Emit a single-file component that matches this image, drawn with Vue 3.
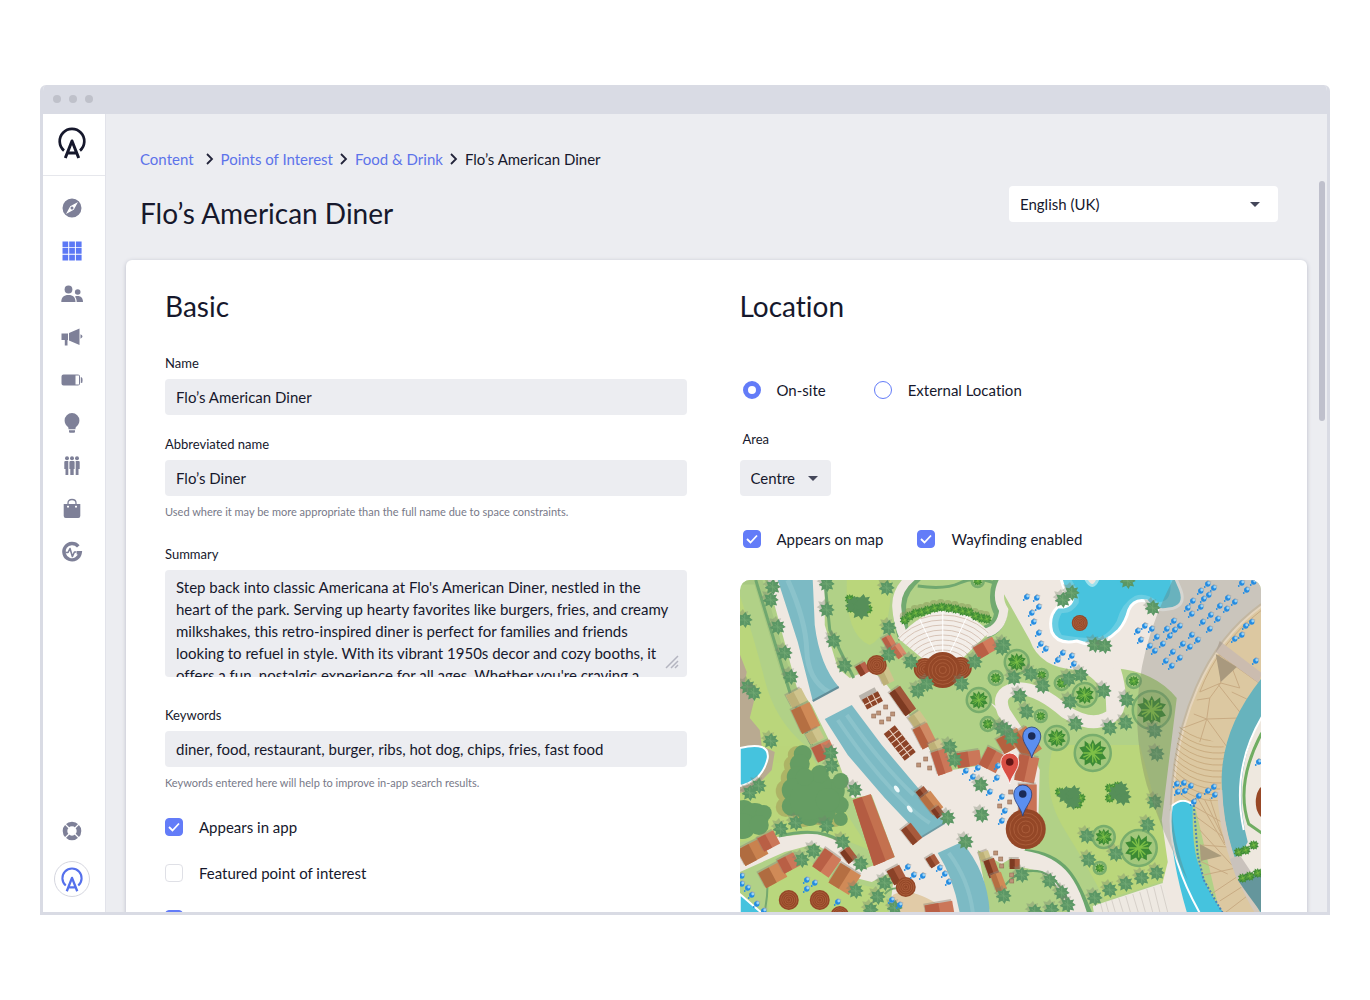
<script setup>
import { ref } from 'vue'

const name = ref('Flo’s American Diner')
const shortName = ref('Flo’s Diner')
const summary = ref("Step back into classic Americana at Flo's American Diner, nestled in the\nheart of the park. Serving up hearty favorites like burgers, fries, and creamy\nmilkshakes, this retro-inspired diner is perfect for families and friends\nlooking to refuel in style. With its vibrant 1950s decor and cozy booths, it\noffers a fun, nostalgic experience for all ages. Whether you're craving a")
const keywords = ref('diner, food, restaurant, burger, ribs, hot dog, chips, fries, fast food')
const site = ref('on')

const crumbs = ['Content', 'Points of Interest', 'Food & Drink']

// Map decoration: [x, y, radius]
const rings = [
  [277, 82, 12], [345, 115, 12], [412, 130, 19], [394, 101, 7], [302, 95, 6], [322, 103, 7],
  [301, 136, 6], [317, 158, 12], [353, 173, 18], [364, 257, 11], [399, 268, 18], [360, 288, 6],
  [239, 120, 12], [256, 98, 7], [248, 144, 7], [238, 1, 6]
]
const palms = [
  [31, 20], [38, 47], [45, 73], [51, 97], [87, 4], [87, 30], [94, 61], [105, 86], [5, 40], [8, 107], [14, 113],
  [31, 161], [147, 8], [149, 48], [149, 75], [171, 82], [235, 82], [178, 111], [187, 104], [222, 104], [262, 68],
  [262, 148], [210, 167], [323, 20], [332, 13], [388, 1], [413, 28], [355, 65], [365, 66], [341, 95],
  [303, 106], [364, 111], [387, 120], [386, 143], [370, 148], [336, 144], [280, 116], [287, 132],
  [264, 65], [266, 150], [272, 158], [274, 98], [291, 94], [329, 99], [330, 122], [415, 151], [417, 174], [415, 222],
  [408, 245], [347, 256], [349, 280], [376, 274], [355, 318], [370, 310], [386, 304], [402, 298], [417, 293],
  [282, 295], [310, 301], [322, 313], [328, 325], [264, 316], [312, 330], [295, 332], [92, 186], [115, 210],
  [33, 7], [10, 213], [19, 206], [41, 249], [56, 243], [87, 246], [103, 262], [62, 280], [74, 271], [121, 284],
  [116, 311], [145, 303], [138, 317], [131, 330], [155, 328], [208, 238], [226, 262], [241, 205], [242, 235],
  [215, 180], [91, 173]
]
const bushes = [
  [165, 40], [170, 36], [176, 33], [182, 32], [188, 30], [195, 28], [202, 27], [209, 28], [216, 29], [223, 31],
  [229, 32], [236, 36], [242, 38], [247, 39], [110, 19], [115, 21], [128, 29], [111, 28],
  [320, 212], [338, 224], [341, 218], [370, 208], [378, 206], [370, 218], [499, 272], [506, 270], [514, 265],
  [503, 298], [510, 296], [518, 293]
]
const groves = [
  [114, 25, 9], [121, 30, 10], [123, 23, 9], [326, 215, 9], [333, 221, 9], [334, 213, 8], [377, 213, 9], [383, 217, 9], [381, 209, 8]
]
const trees = [
  [63, 174, 9], [60, 184, 10], [58, 197, 11], [54, 210, 12], [52, 226, 10], [70, 235, 11], [84, 232, 12], [101, 239, 7],
  [100, 225, 9], [93, 211, 12], [78, 205, 14], [101, 201, 8], [70, 220, 20], [80, 194, 9], [88, 220, 12],
  [4, 231, 11], [15, 237, 14], [3, 246, 13], [24, 233, 8], [19, 245, 10], [65, 197, 9]
]
const umbrellas = [
  [287, 17], [297, 18], [292, 33], [299, 27], [294, 42], [299, 53], [301, 64], [306, 69], [323, 73], [318, 80],
  [332, 76], [334, 84], [398, 51], [405, 46], [401, 60], [412, 49], [461, 11], [468, 4], [474, 8], [469, 15],
  [464, 19], [453, 21], [448, 28], [452, 34], [461, 27], [434, 41], [427, 49], [430, 56], [440, 46], [435, 50],
  [488, 18], [480, 26], [487, 29], [495, 22], [471, 35], [463, 42], [470, 49], [478, 39], [452, 55], [443, 64],
  [450, 67], [458, 60], [417, 57], [410, 66], [415, 71], [423, 64], [433, 72], [426, 81], [432, 86], [440, 78],
  [502, 3], [507, 10], [514, 2], [495, 59], [502, 55], [506, 46], [512, 42], [516, 81], [519, 182],
  [226, 191], [238, 188], [233, 197], [262, 217], [265, 231], [262, 241], [168, 287], [174, 295], [183, 296],
  [200, 288], [205, 294], [209, 302], [67, 300], [75, 303], [67, 309], [98, 322], [152, 320], [160, 325],
  [2, 296], [2, 304], [8, 308], [12, 315], [17, 324], [24, 331],
  [437, 204], [444, 203], [451, 206], [438, 212], [445, 211], [459, 216], [468, 211], [474, 207], [475, 215], [454, 222],
  [258, 186], [257, 198], [250, 212]
]
// Roofs: [centre x, centre y, width, height, angle, light, dark]
const roofs = [
  [57, 118, 17, 14, -28, '#cfc48d', '#bdb077'], [66, 138, 20, 26, -25, '#d08a57', '#b56f42'],
  [75, 156, 15, 12, -28, '#cfc48d', '#bdb077'], [84, 171, 20, 16, -25, '#d27b5c', '#b95f45'],
  [146, 96, 12, 16, -25, '#cfc48d', '#bdb077'], [163, 121, 13, 28, -35, '#a0573a', '#7d3a22'],
  [178, 140, 14, 14, -35, '#cfc48d', '#bdb077'], [185, 156, 16, 22, -27, '#d08a64', '#b5613f'],
  [197, 167, 13, 12, -27, '#cfc48d', '#bdb077'],
  [150, 63, 10, 15, -30, '#d27b5c', '#b95f45'], [159, 71, 10, 13, -35, '#d98a6c', '#c06a4e'],
  [246, 68, 22, 13, -30, '#d27b5c', '#b95f45'], [123, 89, 11, 11, -30, '#b9604a', '#8d4029'],
  [202, 182, 15, 24, -18, '#cb7759', '#b95f45'], [229, 179, 24, 15, -9, '#cb7759', '#b95f45'],
  [252, 180, 19, 20, 27, '#c97355', '#b95f45'], [271, 161, 24, 17, -30, '#d08a57', '#b5613f'],
  [286, 163, 20, 28, -35, '#c98053', '#b0623f'], [287, 189, 20, 26, 12, '#cb7759', '#b95f45'],
  [288, 220, 18, 31, 0, '#c97355', '#b25a3e'],
  [183, 213, 10, 10, -38, '#a0573a', '#7d3a22'], [192, 223, 13, 21, -38, '#d08a57', '#b56f42'],
  [198, 232, 9, 10, -38, '#a0573a', '#7d3a22'], [172, 254, 12, 19, -38, '#a85a3c', '#8a4228'],
  [193, 281, 10, 11, -32, '#a85a3c', '#8a4228'], [157, 295, 14, 16, -28, '#a85a3c', '#8a4228'],
  [13, 272, 26, 18, -28, '#c9824f', '#b06c40'], [29, 261, 18, 15, -28, '#cb7759', '#b95f45'],
  [33, 295, 24, 17, -28, '#d08a57', '#b06c40'], [49, 283, 18, 15, -28, '#cb7759', '#b95f45'],
  [87, 283, 20, 22, 35, '#cf7a5a', '#b95f45'], [105, 299, 24, 23, 32, '#d08a57', '#b56f42'],
  [109, 275, 11, 14, -38, '#a85a3c', '#7d3a22'],
  [245, 276, 10, 9, -20, '#cfc48d', '#bdb077'], [252, 288, 11, 18, -20, '#a85a3c', '#7d3a22'],
  [259, 302, 11, 18, -20, '#d08a57', '#b56f42'], [275, 284, 10, 10, 0, '#a85a3c', '#7d3a22'],
  [200, 331, 28, 16, -10, '#cb7759', '#b95f45']
]
// Round thatched huts: [x, y, radius]
const huts = [
  [185, 89, 11], [221, 88, 11], [203, 90, 18], [137, 85, 10], [286, 249, 20], [340, 43, 8], [166, 307, 10],
  [49, 320, 10], [80, 320, 10], [100, 335, 9]
]
const tables = [
  [146, 127], [139, 133], [153, 134], [134, 136], [149, 139], [142, 142], [186, 179], [179, 185], [190, 188],
  [256, 273], [261, 279], [262, 286], [271, 212], [270, 222], [260, 226], [272, 295], [272, 301]
]
const pins = [
  { x: 292, y: 178, fill: '#5b8ff0', dot: '#1a2b57', edge: '#27407a' },
  { x: 270, y: 204, fill: '#d94f45', dot: '#611616', edge: '#fff' },
  { x: 283, y: 236, fill: '#5b8ff0', dot: '#1a2b57', edge: '#27407a' }
]
</script>

<template>
  <div class="page">
    <div class="window">
      <div class="titlebar"><i></i><i></i><i></i></div>
      <div class="shell">
        <nav class="sidebar" aria-label="Main">
          <svg width="0" height="0" class="defs" aria-hidden="true">
            <symbol id="brand" viewBox="0 0 28 32">
              <path d="M6 23.600A12.300 12.300 0 1 1 22 23.600" fill="none" stroke="currentColor" stroke-width="2.700" />
              <path d="M7.300 31 14 14 20.700 31M9.600 26h8.800" fill="none" stroke="currentColor" stroke-width="3" stroke-linejoin="round" />
            </symbol>
          </svg>
          <a href="#" class="logo" aria-label="Home"><svg width="28" height="32"><use href="#brand" /></svg></a>
          <div class="nav-items">
            <a href="#" aria-label="Explore"><svg viewBox="0 0 24 24"><path fill-rule="evenodd" d="M12 2.500a9.500 9.500 0 1 0 0 19 9.500 9.500 0 0 0 0-19ZM18 6l-4.200 7.800L6 18l4.200-7.800ZM12 10.500a1.500 1.500 0 1 0 0 3 1.500 1.500 0 0 0 0-3Z" /></svg></a>
            <a href="#" aria-label="Content" class="active"><svg viewBox="0 0 24 24"><path d="M2.500 2.500h5.700v5.700H2.500zM9.200 2.500h5.700v5.700H9.200zM15.900 2.500h5.700v5.700h-5.700zM2.500 9.100h5.700v5.700H2.500zM9.200 9.100h5.700v5.700H9.200zM15.900 9.100h5.700v5.700h-5.700zM2.500 15.700h5.700v5.700H2.500zM9.200 15.700h5.700v5.700H9.200zM15.900 15.700h5.700v5.700h-5.700z" /></svg></a>
            <a href="#" aria-label="Users"><svg viewBox="0 0 24 24"><circle cx="8.500" cy="7.500" r="3.900" /><circle cx="17.700" cy="10" r="2.800" /><path d="M1.300 20c0-4.500 2.500-7 7.200-7s7 2.500 7 7ZM16.700 20c0-2.300-.6-4-1.700-5.500 4.500-1.500 8 .5 8 5.500Z" /></svg></a>
            <a href="#" aria-label="Campaigns"><svg viewBox="0 0 24 24"><path d="M19.500 3.500v16.500L9 15.500V8ZM1.500 8.500H8V15H7.500v5.500H4.800V15H1.500ZM20.500 9.300q4 2.200 0 4.400Z" /></svg></a>
            <a href="#" aria-label="Capacity"><svg viewBox="0 0 24 24"><path fill-rule="evenodd" d="M3.500 6.500h14.500q2 0 2 2v7q0 2-2 2h-14.500q-2 0-2-2v-7q0-2 2-2ZM15.500 7.500v9h3.500v-9ZM20.800 9q2.500.3 1.500 5.700l-1.500.3Z" /></svg></a>
            <a href="#" aria-label="Ideas"><svg viewBox="0 0 24 24"><path d="M12 2a7.400 7.400 0 0 0-7.400 7.400c0 3 1.500 4.800 3.400 6.500.5.500.5 1.500.5 2.400h7c0-.9 0-1.900.5-2.400 1.900-1.700 3.400-3.500 3.400-6.500A7.400 7.400 0 0 0 12 2ZM9 19.300h6v1.500q0 1-1 1h-4q-1 0-1-1Z" /></svg></a>
            <a href="#" aria-label="Groups"><svg viewBox="0 0 24 24"><circle cx="7" cy="4.300" r="2" /><circle cx="12" cy="4.300" r="2" /><circle cx="17" cy="4.300" r="2" /><path d="M4.300 8q0-1 1-1h3v14H5.500v-6H4.300ZM9.400 8q.2-1 1-1h3.200q.8 0 1 1v7h-.9v6h-3.400v-6h-.9ZM15.700 7h3q1 0 1 1v7h-1.200v6h-2.800Z" /></svg></a>
            <a href="#" aria-label="Shop"><svg viewBox="0 0 24 24"><path d="M8 9V6q0-3.500 4-3.500T16 6v3" fill="none" stroke="currentColor" stroke-width="1.300" /><path fill-rule="evenodd" d="M3.700 7h16.600v12q0 2-2 2H5.700q-2 0-2-2ZM7 8.500v2h2v-2ZM15 8.500v2h2v-2Z" /></svg></a>
            <a href="#" aria-label="Activity"><svg viewBox="0 0 24 24" fill="none" stroke="currentColor"><path d="M18.300 6.300A8.200 8.200 0 1 0 20.200 12.800h-3.500" stroke-width="3.400" /><path d="M5.500 12.500H8l2-4 2.400 8 2-4.500h2" stroke-width="1.600" stroke-linejoin="round" /></svg></a>
          </div>
          <div class="nav-foot">
            <a href="#" aria-label="Help"><svg viewBox="0 0 24 24" fill="none"><circle cx="12" cy="12" r="7" stroke="currentColor" stroke-width="4.600" /><path d="m5 5 4 4m6 6 4 4M19 5l-4 4m-6 6-4 4" stroke="#fff" stroke-width="1.200" /></svg></a>
            <a href="#" class="avatar" aria-label="Account"><svg width="22" height="25"><use href="#brand" /></svg></a>
          </div>
        </nav>

        <main>
          <header>
            <div class="headings">
              <nav class="crumbs" aria-label="Breadcrumb">
                <template v-for="c in crumbs" :key="c">
                  <a href="#">{{ c }}</a>
                  <svg width="8" height="12" viewBox="0 0 8 12"><path d="m1 1 5 5-5 5" fill="none" stroke="#22243a" stroke-width="1.800" /></svg>
                </template>
                <span>Flo’s American Diner</span>
              </nav>
              <h1>Flo’s American Diner</h1>
            </div>
            <div class="select language">
              <select aria-label="Language"><option>English (UK)</option></select>
              <svg width="10" height="5" viewBox="0 0 10 5"><path d="M0 0h10L5 5z" /></svg>
            </div>
          </header>

          <div class="card">
            <section>
              <h2>Basic</h2>
              <div class="field">
                <label for="name">Name</label>
                <input id="name" v-model="name" type="text" />
              </div>
              <div class="field hinted">
                <label for="short">Abbreviated name</label>
                <input id="short" v-model="shortName" type="text" />
                <p>Used where it may be more appropriate than the full name due to space constraints.</p>
              </div>
              <div class="field long">
                <label for="summary">Summary</label>
                <div class="area">
                  <textarea id="summary" v-model="summary"></textarea>
                  <svg width="14" height="14" viewBox="0 0 14 14"><path d="M1 13 13 1M6 13l7-7M10 13l3-3" stroke="#b4b5c0" stroke-width="1.500" /></svg>
                </div>
              </div>
              <div class="field hinted">
                <label for="keywords">Keywords</label>
                <input id="keywords" v-model="keywords" type="text" />
                <p>Keywords entered here will help to improve in-app search results.</p>
              </div>
              <div class="checks">
                <label class="choice"><input type="checkbox" checked />Appears in app</label>
                <label class="choice"><input type="checkbox" />Featured point of interest</label>
                <label class="choice"><input type="checkbox" checked aria-label="Additional option" /></label>
              </div>
            </section>

            <section>
              <h2>Location</h2>
              <div class="row radios">
                <label class="choice"><input v-model="site" type="radio" name="site" value="on" />On-site</label>
                <label class="choice"><input v-model="site" type="radio" name="site" value="ext" />External Location</label>
              </div>
              <div class="zone">
                <label for="zone">Area</label>
                <div class="select">
                  <select id="zone"><option>Centre</option></select>
                  <svg width="10" height="5" viewBox="0 0 10 5"><path d="M0 0h10L5 5z" /></svg>
                </div>
              </div>
              <div class="row flags">
                <label class="choice"><input type="checkbox" checked />Appears on map</label>
                <label class="choice"><input type="checkbox" checked />Wayfinding enabled</label>
              </div>

              <svg class="map" viewBox="0 0 522 400" preserveAspectRatio="xMidYMin slice" role="img" aria-label="Park map">
                <defs>
                  <symbol id="palm" viewBox="-10 -10 20 20" overflow="visible">
                    <path d="M1-10 3-6 8-7 6-3 10 0 6 2 8 7 3 6 1 10-2 6-7 8-6 3-10 1-6-2-8-7-3-6Z" />
                  </symbol>
                  <symbol id="fern" viewBox="-10 -10 20 20" overflow="visible">
                    <path fill="#3c8a35" d="M0-10 2-6 6-9 6-5 10-4 7 0 10 4 6 5 6 9 2 7 0 10-2 7-6 9-6 5-10 4-7 0-10-4-6-5-6-9-2-6Z" />
                    <path stroke="#7dbf46" d="M0-7V7M-7 0H7M-5-5 5 5M-5 5 5-5M-3-7 3 7M-7 3 7-3" />
                  </symbol>
                  <clipPath id="fan"><path d="M158 58Q203 6 250 52L218 83H188Z" /></clipPath>
                  <clipPath id="steps"><path d="M440 146 487 168 482 200 478 221 432 221 434 185Z" /></clipPath>
                </defs>

                <rect width="522" height="400" fill="#b1d187" />
                <path d="M0 15Q15 60 25 100T65 165L95 215 130 270 80 250 0 262Z" fill="#bad67b" />
                <path d="M0 0 18 0 45 90 75 165" stroke="#a6c781" stroke-width="9" fill="none" />
                <path d="M107 0h44Q152 55 130 65 105 55 107 0Z" fill="#bad67b" />
                <path d="M314 165Q300 210 325 250T365 320L427 300 428 270 400 165Z" fill="#bad67b" />
                <path d="M30 400 28 300 65 278 100 300 145 310 160 400Z" fill="#b9d77d" />
                <path d="M0 74 7 92 4 107 15 118 10 138 20 150 22 166 35 172 32 190 15 208 0 213Z" fill="#b9aa91" />

                <!-- park paths -->
                <g fill="#efe8e1">
                  <path d="M28 0H85L85 45 98 88 110 98 128 90 142 98 182 152 200 192 262 182 262 130 250 122 275 150 287 160 300 190 298 262 285 270 262 284 238 270 250 332 252 400 140 400 150 330 155 290 132 302 108 296 95 275 75 264 45 272 0 292V268L38 257 75 253 96 260 122 290 155 277 132 215 112 218 95 172 72 125 57 107Z" />
                  <path d="M263 0H522V60L470 110 440 180 430 230 460 333 485 400 430 400 423 302 428 282 422 240 437 118Q415 91 374 88L381 128 367 142 366 118Q357 96 337 90 300 88 290 60L263 12Z" />
                </g>
                <path d="M263 10Q287 42 291 64 303 89 337 91" fill="none" />
                <path d="M374 88Q388 132 366 139 350 147 326 132 296 106 275 109 256 113 264 132L281 158" fill="none" stroke="#efe8e1" stroke-width="13" />
                <g fill="none">
                  <path d="M177-5Q161 9 160 24T165 59M262-5Q252 18 261 33 259 48 246 52" stroke="#72aa70" stroke-width="13" />
                  <path d="M174-5Q156 9 157 27T165 59M267-5Q254 14 264 30 262 49 246 53" stroke="#efe8e1" stroke-width="9" />
                  <path d="M178 6Q205 10 220 3T255 3M16 0 50 112 72 165M85 0 90 50 114 98M39 256Q80 246 102 262" stroke="#70a86f" stroke-width="3" />
                  <path d="M285 272C325 275 335 298 351 337" stroke="#6ba66c" stroke-width="6" />
                  <path d="M272 278C318 280 330 302 342 345" stroke="#efe8e1" stroke-width="17" />
                  <path d="M260 312Q278 286 302 292 328 303 330 340" stroke="#6ba66c" stroke-width="2" />
                  <path d="M3 400Q28 345 28 300M145 314Q155 302 175 315L203 330" stroke="#75a86e" stroke-width="2" />
                </g>
                <path d="M153 315Q170 305 204 328V400H150Z" fill="#e1cba7" />
                <path d="M353 326 423 303 432 333 422 400 365 400Z" fill="#eee9e2" />
                <path d="m361 324 5 20m0-22 6 22m0-24 7 24m0-26 8 26m-1-28 8 28m-1-30 9 30m-2-32 9 32m-2-35 9 35m-2-37 9 37m-2-39 10 39" stroke="#d7d1ca" />

                <!-- waterways -->
                <path d="M38 0H73L75 45Q80 85 99 107L73 121 58 62Z" fill="#7cbac4" />
                <path d="M48 0Q66 40 67 70T89 112" stroke="#8bc3cb" stroke-width="5" fill="none" />
                <path d="M73 121 99 107" stroke="#628d98" stroke-width="2" />
                <path d="M85 139 112 125 142 165 180 210 205 243 182 257 145 218 108 175Z" fill="#7cbac4" />
                <path d="M98 140Q125 180 150 207T190 243M107 135Q141 184 174 215" stroke="#8bc3cb" stroke-width="4" fill="none" />
                <path d="M182 257 205 243" stroke="#6d9aa3" stroke-width="2" />
                <path d="M198 273 222 262Q248 292 250 333V400H225Q226 317 198 273Z" fill="#7cbac4" />
                <path d="M209 273Q233 305 234 345" stroke="#8bc3cb" stroke-width="4" fill="none" />
                <g fill="#eef9fa"><ellipse cx="157" cy="209" rx="2" ry="4" transform="rotate(-35 157 209)" /><ellipse cx="170" cy="229" rx="2" ry="4" transform="rotate(-35 170 229)" /></g>
                <path d="M0 168Q30 161 28 178 23 201 0 206Z" fill="#45c3de" stroke="#fff" stroke-width="2" />
                <path d="M0 314 22 333 30 400H0Z" fill="#45c3de" stroke="#fff" stroke-width="2" />

                <!-- lagoon -->
                <path d="M321-4Q323 12 333 17 332 28 318 27 308 36 312 52 318 65 337 61 359 70 379 50 386 42 389 30 394 18 407 21 414 32 429 29 447 27 441 10L435-4Z" fill="#69cde2" stroke="#fff" stroke-width="3" />
                <path d="M329-4Q340 10 339 23 332 34 322 33 315 45 322 55 340 58 350 58 366 60 377 41 382 23 395 16 407 12 418 22 434 23 430-4Z" fill="#48c3de" />
                <path d="M345-3Q353 14 359-3" fill="#efe8e1" stroke="#9de1ed" stroke-width="3" />

                <!-- east stands -->
                <path d="M522 25Q480 55 457 108T432 225L443 219 455 225 480 333 500 400H560V25Z" fill="#dcc8a1" />
                <path d="M522 25Q480 55 457 108T432 225" fill="none" stroke="#e5d5bd" stroke-width="4" />
                <g fill="none" stroke="#c8ab83">
                  <path d="M522 30Q478 64 460 112L481 103 480 75 522 105M481 103 500 108 492 87M457 120 470 118 481 103M470 118 467 139 443 148M467 139 500 138M478 104 500 132M454 134 467 139 460 162M467 139 488 168M492 112 507 119M452 225 487 245M454 235 488 260M456 215 485 265M460 250 492 285M462 265 488 267M460 281 488 294M464 295 496 288M473 313 503 293M480 321 505 305M485 333 510 314M470 218 485 263M465 220 487 265" />
                </g>
                <g clip-path="url(#steps)" fill="none" stroke="#c9ac80">
                  <path v-for="i in 12" :key="i" :d="`M430 ${132 + i * 6}Q455 ${160 + i * 6} 490 ${154 + i * 6}`" />
                </g>
                <path d="M480 61 522 93 519 103 476 72Z" fill="#cbbcaf" />
                <path d="M476 74 497 87 481 102Z" fill="#a9997e" />
                <path d="M460 264 482 276 461 281Z" fill="#aa9c7c" />
                <path d="M522 98Q484 145 482 195 480 265 520 333L530 400H560V98Z" fill="#67b3bd" />
                <path d="M522 137Q490 195 508 262L498 279 505 291 522 324V400H560V137Z" fill="#eee8df" />
                <path d="M480 210Q482 275 521 338" stroke="#d5c9bb" stroke-width="5" fill="none" />
                <path d="M522 153Q495 204 509 244L522 253" fill="none" stroke="#6fad62" stroke-width="3" />
                <path d="M522 137Q491 190 504 250" fill="none" stroke="#fff" stroke-width="2" />
                <path d="M498 300 522 291V333Q508 315 498 300Z" fill="#65969c" />
                <path d="M490 279 500 275 512 293 497 299Z" fill="#c9c2bc" />
                <ellipse cx="526" cy="222" rx="10" ry="17" fill="#984826" />
                <path d="M432 226Q443 216 453 225 452 270 460 287 466 310 484 333V400H470Q425 281 432 226Z" fill="#45c3de" />
                <path d="M460 333Q425 270 432 226 443 216 453 225" fill="none" stroke="#fff" stroke-width="2" />
                <path d="M454 225 458 275 464 300 483 333" fill="none" stroke="#4a80b8" stroke-width="2" stroke-dasharray="2 2" />

                <!-- amphitheatre -->
                <path d="M158 58Q203 6 250 52L218 83H188Z" fill="#f3eee9" />
                <g clip-path="url(#fan)" fill="none" stroke="#d6c3b6">
                  <ellipse v-for="i in 9" :key="i" cx="203" cy="88" :rx="16 + i * 5" :ry="8 + i * 5" />
                  <path d="M203 88V30M203 88 178 35M203 88 228 35" stroke="#fff" />
                </g>

                <g fill="#a39a55" opacity=".55"><circle v-for="(t, i) in trees.slice(0, 8)" :key="i" :cx="t[0] - 6" :cy="t[1] + 1" :r="t[2]" /></g>
                <g fill="#659d63"><circle v-for="(t, i) in trees" :key="i" :cx="t[0]" :cy="t[1]" :r="t[2]" /></g>

                <g v-for="(r, i) in roofs" :key="'r' + i" :transform="`translate(${r[0]} ${r[1]}) rotate(${r[4]})`">
                  <rect :x="-r[2] / 2 - 1" :y="-r[3] / 2 - 2" :width="r[2]" :height="r[3]" fill="#8f8577" opacity=".45" />
                  <rect :x="-r[2] / 2" :y="-r[3] / 2" :width="r[2]" :height="r[3]" :fill="r[5]" />
                  <rect :x="-r[2] / 2" :y="-r[3] / 2" :width="r[2] / 2" :height="r[3]" :fill="r[6]" />
                </g>
                <path d="M113 220 131 214 155 277 134 286Z" fill="#c4714f" />
                <path d="M113 220 122 217 146 281 134 286Z" fill="#b45c42" />
                <g v-for="(d, i) in [[132, 119, -28, 18], [160, 163, -38, 0]]" :key="'d' + i" :transform="`translate(${d[0]} ${d[1]}) rotate(${d[2]})`">
                  <rect v-if="d[3]" x="-10" y="-9" width="18" height="8" fill="#bab4ac" />
                  <rect :x="d[3] ? -9 : -7" :y="d[3] ? -4 : -17" :width="d[3] || 14" :height="d[3] ? 11 : 34" fill="#8c4327" />
                  <path :d="d[3] ? 'M-9 2H9M-3-4V7M3-4V7' : 'M0-17V17M-7-11H7M-7-5H7M-7 1H7M-7 7H7M-7 12H7'" stroke="#ead3c3" />
                </g>

                <g v-for="(h, i) in huts" :key="'h' + i" fill="none" stroke="#b26441" stroke-width=".7">
                  <circle :cx="h[0]" :cy="h[1]" :r="h[2]" fill="#944727" stroke="none" />
                  <circle v-for="k in 4" :key="k" :cx="h[0]" :cy="h[1]" :r="h[2] * k / 5" />
                </g>
                <rect v-for="(t, i) in tables" :key="'t' + i" :x="t[0] - 2" :y="t[1] - 2" width="4" height="4" fill="#bd9479" stroke="#946c55" stroke-width=".6" />

                <g v-for="(r, i) in rings" :key="'g' + i">
                  <circle :cx="r[0]" :cy="r[1]" :r="r[2]" fill="#a3c87c" stroke="#78ad6c" stroke-width="2.500" />
                  <use href="#fern" :x="r[0] - r[2] * 0.75" :y="r[1] - r[2] * 0.75" :width="r[2] * 1.5" :height="r[2] * 1.5" />
                </g>
                <g fill="#8a9a5a" opacity=".5"><circle v-for="(b, i) in bushes.slice(0, 14)" :key="i" :cx="b[0] - 1" :cy="b[1] - 4" r="4" /></g>
                <use v-for="(b, i) in bushes" :key="'b' + i" href="#fern" :x="b[0] - 5" :y="b[1] - 5" width="10" height="10" />
                <g fill="#568f59"><use v-for="(g, i) in groves" :key="'v' + i" href="#palm" :x="g[0] - g[2]" :y="g[1] - g[2]" :width="g[2] * 2" :height="g[2] * 2" /></g>
                <g v-for="(p, i) in palms" :key="'p' + i">
                  <use href="#palm" :x="p[0] - 10" :y="p[1] - 11" width="15" height="15" fill="#75836e" opacity=".35" />
                  <use href="#palm" :x="p[0] - 8" :y="p[1] - 8" width="16" height="16" fill="#5b9765" />
                  <path :d="`M${p[0]} ${p[1] - 5}v10m-5-5h10m-8-3 6 6`" stroke="#73a973" stroke-width=".8" />
                </g>

                <!-- shade -->
                <path d="M433 0H522V25Q480 55 457 108T432 225Q433 260 448 300 425 260 407 205 379 105 433 0Z" fill="#6c6a5e" opacity=".28" />

                <g v-for="(u, i) in umbrellas" :key="'u' + i">
                  <path :d="`M${u[0] - 3} ${u[1]}l3-4 4 2z`" fill="#a9a8a8" />
                  <circle :cx="u[0]" :cy="u[1]" r="2.700" fill="#248ce2" />
                  <circle :cx="u[0] + 1" :cy="u[1] - 1" r="1.400" fill="#9bd3f5" />
                  <circle :cx="u[0] - 3" :cy="u[1] + 3" r=".9" fill="#248ce2" />
                </g>

                <g v-for="(p, i) in pins" :key="'n' + i" :transform="`translate(${p.x} ${p.y})`">
                  <path d="M0 0C-2-9-9-14-9-22a9 9 0 0 1 18 0C9-14 2-9 0 0Z" :fill="p.fill" :stroke="p.edge" stroke-width=".8" />
                  <circle cy="-22" r="3.800" :fill="p.dot" />
                </g>
              </svg>
            </section>
          </div>
          <div class="thumb"></div>
        </main>
      </div>
    </div>
  </div>
</template>

<style>
body { margin: 0; background: #fff; }
</style>

<style scoped>
* { box-sizing: border-box; }
.page {
  height: 100vh;
  padding: 85px 40px;
  font-family: Lato, "Noto Sans", sans-serif;
  font-size: 15px;
  line-height: 20px;
  font-variant-ligatures: none;
  color: #16182c;
}
.window {
  display: flex;
  flex-direction: column;
  height: 100%;
  border: 3px solid #d9dbe4;
  border-top: 0;
  border-radius: 6px 6px 0 0;
  overflow: hidden;
}
.titlebar {
  display: flex;
  align-items: center;
  gap: 8px;
  flex: 0 0 29px;
  padding: 0 10px 2px;
  background: #d9dbe4;
}
.titlebar i { width: 8px; height: 8px; border-radius: 50%; background: #bfc1ca; }
.shell { display: flex; flex: 1; min-height: 0; }
.sidebar {
  display: flex;
  flex-direction: column;
  flex: 0 0 63px;
  padding-right: 4px;
  border-right: 1px solid #e2e3ea;
  background: #fff;
}
.defs { position: absolute; }
.logo {
  display: flex;
  justify-content: center;
  align-items: center;
  flex: 0 0 62px;
  margin-right: -4px;
  padding: 0 4px 4px 0;
  border-bottom: 1px solid #e6e7ec;
  color: #16182c;
}
.nav-items { display: flex; flex-direction: column; gap: 19px; align-items: center; padding-top: 20px; }
.nav-items a, .nav-foot a { display: flex; color: #7e8098; }
.nav-items svg, .nav-foot a:first-child svg { width: 24px; height: 24px; }
.nav-items svg:not([fill]) { fill: currentColor; }
.nav-items .active { color: #5c78f5; }
.nav-foot { display: flex; flex-direction: column; align-items: center; gap: 18px; margin-top: auto; padding-bottom: 15px; }
.nav-foot .avatar {
  align-items: center;
  justify-content: center;
  width: 36px;
  height: 36px;
  border: 1px solid #d5d6df;
  border-radius: 50%;
  color: #5570ec;
}
main { position: relative; flex: 1; min-width: 0; padding: 0 20px; overflow: hidden; background: #ecedf1; }
header { display: flex; justify-content: space-between; height: 146px; padding: 35px 29px 0 14px; }
.crumbs { display: flex; align-items: center; gap: 7px; }
.crumbs a { color: #5c73ea; text-decoration: none; }
.crumbs a:first-child { margin-right: 5px; }
h1, h2 { margin: 0; font-size: 28px; line-height: 34px; font-weight: 400; }
h1 { margin-top: 27px; }
.select { position: relative; display: inline-block; }
.select svg { position: absolute; right: 13px; top: 16px; fill: #44475a; pointer-events: none; }
.language { width: 269px; margin-top: 37px; }
.language svg { right: 18px; }
select, input, textarea { font: inherit; font-variant-ligatures: none; color: inherit; }
select {
  display: block;
  width: 100%;
  height: 36px;
  padding: 0 35px 0 11px;
  border: 0;
  border-radius: 4px;
  appearance: none;
  background: #ecedf1;
}
.language select { background: #fff; }
.card {
  display: grid;
  grid-template-columns: minmax(0, 1fr) minmax(0, 1fr);
  gap: 53px;
  padding: 29px 46px 0 39px;
  border-radius: 6px;
  background: #fff;
  box-shadow: 0 1px 4px #b9bbc8;
}
h2 { margin-bottom: 30px; }
.field { margin-bottom: 19px; }
.field > label, .zone > label { display: block; margin-bottom: 6px; font-size: 13px; }
.field input, textarea {
  display: block;
  width: 100%;
  height: 36px;
  padding: 0 11px 1px;
  border: 0;
  border-radius: 4px;
  background: #ecedf1;
}
.field p { margin: 7px 0 0; font-size: 11px; line-height: 18px; color: #777988; }
.hinted { margin-bottom: 23px; }
.long { margin-bottom: 28px; }
.area { position: relative; }
.area svg { position: absolute; right: 8px; bottom: 8px; }
textarea { height: 107px; padding: 6px 11px 0; line-height: 22px; resize: none; overflow: hidden; white-space: pre; }
.checks { display: flex; flex-direction: column; gap: 26px; margin-top: 25px; }
.choice { display: flex; align-items: center; gap: 16px; min-height: 20px; }
.choice input {
  flex: none;
  width: 18px;
  height: 18px;
  margin: 0;
  border: 1px solid #dfe0e6;
  border-radius: 4px;
  appearance: none;
  background: #fff;
}
.choice input[type="checkbox"]:checked {
  border-color: #637cf8;
  background: #637cf8 url("data:image/svg+xml,%3Csvg xmlns='http://www.w3.org/2000/svg' viewBox='0 0 16 16'%3E%3Cpath d='m3 8 3.500 3.500 6.500-7' fill='none' stroke='white' stroke-width='1.800'/%3E%3C/svg%3E");
}
.choice input[type="radio"] { border-color: #637cf8; border-radius: 50%; }
.choice input[type="radio"]:checked { border-width: 5px; }
.row { display: flex; padding-left: 3px; }
.radios { gap: 48px; margin-top: 57px; }
.zone { margin: 29px 0 33px; }
.zone > label { margin-bottom: 11px; padding-left: 3px; }
.flags { gap: 34px; }
.map { display: block; width: 100%; height: 400px; margin-top: 31px; border-radius: 10px; }
.thumb { position: absolute; top: 67px; right: 2px; width: 6px; height: 240px; border-radius: 3px; background: #bfc0cc; }
</style>
